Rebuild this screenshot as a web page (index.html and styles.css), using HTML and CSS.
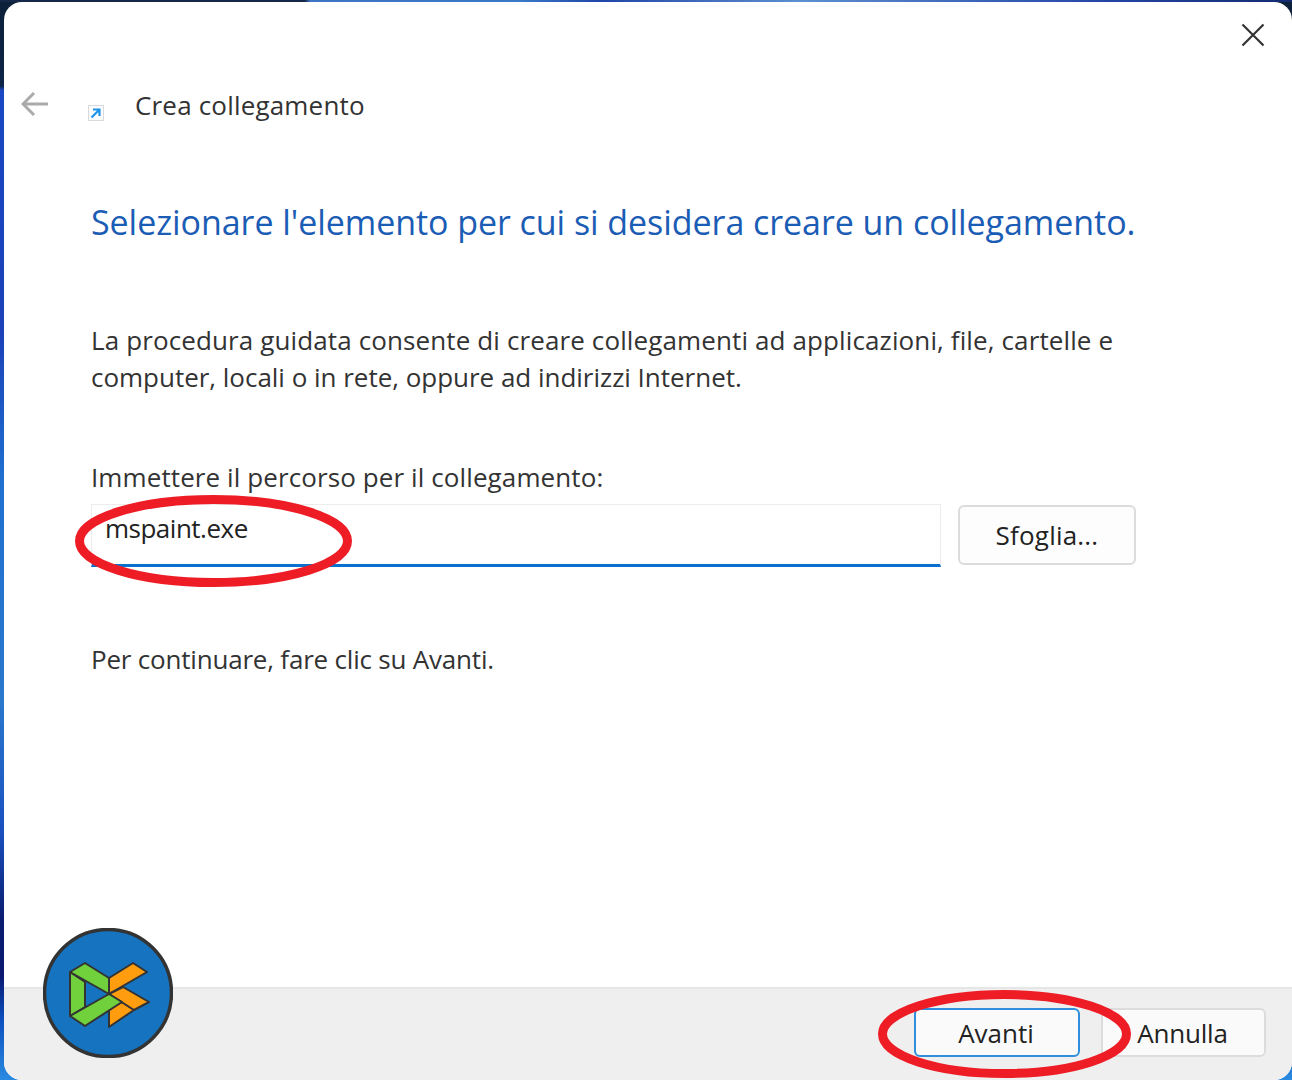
FILE: index.html
```html
<!DOCTYPE html>
<html lang="it">
<head>
<meta charset="utf-8">
<title>Crea collegamento</title>
<link rel="stylesheet" href="styles.css">
</head>
<body>
<div class="window">
  <div class="titlebar">
    <svg class="close" viewBox="0 0 24 24" width="24" height="24"><path d="M1.500 1.500L22.500 22.500M22.500 1.500L1.500 22.500"/></svg>
  </div>
  <div class="nav">
    <svg class="back" viewBox="0 0 28 26" width="28" height="26"><path d="M27 13H2M13 2L2 13L13 24"/></svg>
    <svg class="shortcut" viewBox="0 0 16 16" width="16" height="16">
      <rect x="0.500" y="0.500" width="15" height="15" fill="#fafcff" stroke="#d8dadc"/>
      <path d="M3.500 12.500L11 5M5 4.500H11.500V11" fill="none" stroke="#1f93e8" stroke-width="2.200"/>
    </svg>
    <span class="nav-title">Crea collegamento</span>
  </div>
  <main class="content">
    <h1 class="heading">Selezionare l'elemento per cui si desidera creare un collegamento.</h1>
    <p class="intro">La procedura guidata consente di creare collegamenti ad applicazioni, file, cartelle e<br><span class="intro-second">computer, locali o in rete, oppure ad indirizzi Internet.</span></p>
    <label class="field-label">Immettere il percorso per il collegamento:</label>
    <div class="field-row">
      <div class="input">mspaint.exe</div>
      <div class="btn browse">Sfoglia...</div>
    </div>
    <p class="hint">Per continuare, fare clic su Avanti.</p>
  </main>
  <footer class="footer">
    <div class="btn next">Avanti</div>
    <div class="btn cancel">Annulla</div>
  </footer>
</div>

<svg class="ring ring-input" viewBox="0 0 280 94" width="280" height="94"><ellipse cx="139.500" cy="47" rx="134" ry="41.500"/></svg>
<svg class="ring ring-next" viewBox="0 0 256 92" width="256" height="92"><ellipse cx="126.500" cy="45" rx="122" ry="39.500"/></svg>

<svg class="logo" viewBox="0 0 130 130" width="130" height="130">
  <circle cx="65" cy="65" r="63.500" fill="#1573c0" stroke="#333" stroke-width="3.500"/>
  <g stroke="#333" stroke-width="2" stroke-linejoin="round">
    <path d="M66 50L90 35L104 44L66 66Z" fill="#ff9d0e"/>
    <path d="M66 80L79 74L91 82L66 99Z" fill="#ff9d0e"/>
    <path d="M66 66L80 59L106 74L91 82Z" fill="#ff9d0e"/>
    <path d="M27 44L42 54V79L27 88Z" fill="#70d13c"/>
    <path d="M27 44L42 35L66 50V66Z" fill="#70d13c"/>
    <path d="M27 88L66 66L79 74L42 98Z" fill="#70d13c"/>
  </g>
</svg>
</body>
</html>
```

FILE: styles.css
```css
* { box-sizing: border-box; }
html, body { margin: 0; height: 100%; }
body {
  position: relative;
  width: 1292px;
  height: 1080px;
  overflow: hidden;
  padding: 2px 0 0 4px;
  font-family: "Open Sans", "Noto Sans", sans-serif;
  color: #222;
  background:
    linear-gradient(90deg, #16284a 0, #16284a 305px, #3f74c4 310px, #3a78c8 520px, #1f46a8 600px, #5d8fd0 800px, #2447a8 1100px, #132a70 1292px) 0 0 / 100% 2px no-repeat,
    linear-gradient(180deg, #0c2038 0, #0c2448 86px, #1a48c4 90px, #1b40b8 330px, #1f6fd0 480px, #2a78cc 700px, #1a50c0 830px, #0a1c70 920px, #0a1870 975px, #0c50c0 1020px, #2a8ae0 1080px);
}
.window {
  width: 1288px;
  height: 1078px;
  background: #fff;
  border-radius: 18px;
  overflow: hidden;
  display: flex;
  flex-direction: column;
}
.titlebar {
  height: 66px;
  display: flex;
  justify-content: flex-end;
  padding: 21px 27px 0 0;
  flex: none;
}
.close { display: block; }
.close path { fill: none; stroke: #333; stroke-width: 2.200; }
.nav {
  height: 74px;
  flex: none;
  display: flex;
  align-items: center;
}
.back { margin-left: 17px; margin-top: -3px; }
.back path { fill: none; stroke: #aaa; stroke-width: 3; }
.shortcut { margin-left: 39px; margin-top: 15px; }
.nav-title { margin-left: 31px; margin-top: -1px; font-size: 26px; color: #333; letter-spacing: 0.18px; }
.content { flex: 1; padding: 0 0 0 87px; }
.heading {
  margin: 0;
  padding-top: 57px;
  font-size: 34px;
  line-height: 46px;
  font-weight: 400;
  color: #1b5cb5;
  letter-spacing: -0.06px;
  white-space: nowrap;
}
.intro {
  margin: 77px 0 0;
  font-size: 26px;
  line-height: 37px;
  color: #333;
  letter-spacing: 0.12px;
  white-space: nowrap;
}
.intro-second { letter-spacing: -0.02px; }
.field-label {
  display: block;
  margin-top: 63px;
  font-size: 26px;
  line-height: 36px;
  color: #333;
  letter-spacing: 0.1px;
}
.field-row { display: flex; margin-top: 9px; align-items: flex-start; }
.input {
  width: 850px;
  height: 63px;
  padding: 5px 0 0 13px;
  font-size: 26px;
  line-height: 36px;
  letter-spacing: -0.5px;
  border: 1px solid #ececec;
  border-bottom: 3px solid #0a70cf;
}
.btn {
  display: flex;
  align-items: center;
  justify-content: center;
  font-size: 26px;
  letter-spacing: 0.2px;
  color: #222;
  background: #fdfdfd;
  border: 2px solid #dcdcdc;
  border-radius: 6px;
}
.browse { width: 178px; height: 60px; margin: 1px 0 0 17px; }
.hint {
  margin: 74px 0 0;
  font-size: 26px;
  line-height: 36px;
  color: #333;
  letter-spacing: -0.2px;
}
.footer {
  height: 93px;
  flex: none;
  background: #efefef;
  border-top: 2px solid #e6e6e6;
  display: flex;
  justify-content: flex-end;
  align-items: flex-start;
  gap: 21px;
  padding: 19px 26px 0 0;
}
.next { width: 166px; height: 49px; border-color: #2f8fdc; background: #fafafa; letter-spacing: 0; padding-right: 2px; }
.cancel { width: 165px; height: 49px; background: #fafafa; letter-spacing: -0.2px; padding-right: 2px; }
.ring { position: absolute; }
.ring ellipse { fill: none; stroke: #ee1c25; stroke-width: 9; }
.ring-input { left: 74px; top: 494px; }
.ring-next { left: 878px; top: 989px; }
.logo { position: absolute; left: 43px; top: 928px; }
```
